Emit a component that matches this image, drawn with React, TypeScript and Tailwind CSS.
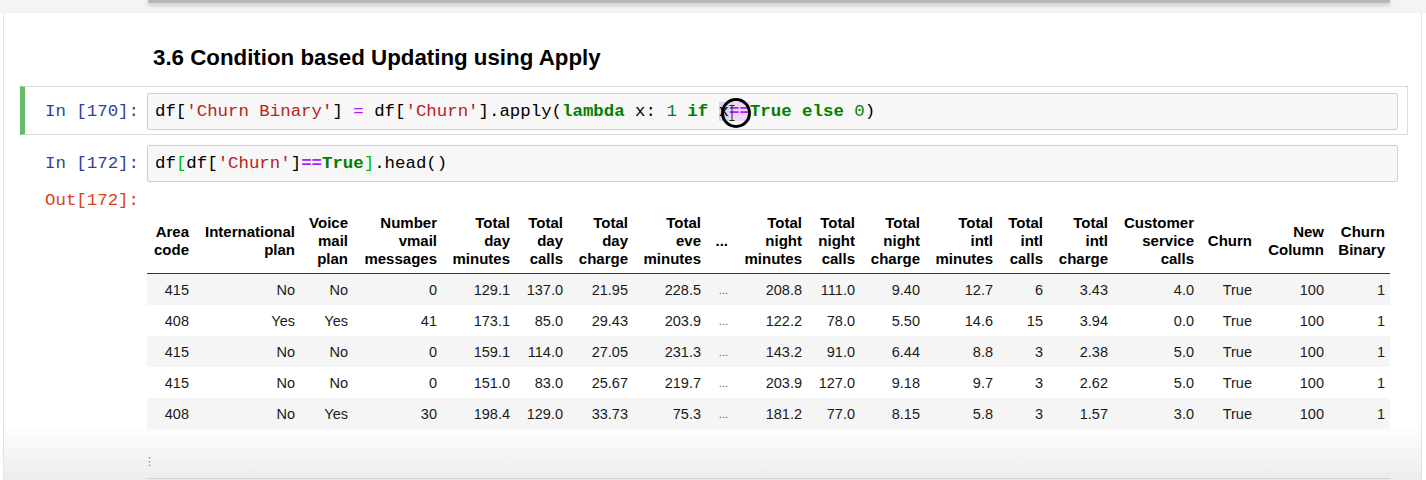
import React from "react";

const colWidths = [47, 106, 53, 89, 73, 53, 65, 73, 27, 74, 53, 65, 73, 50, 65, 86, 58, 72, 61];

const headers = [
  ["Area", "code"],
  ["International", "plan"],
  ["Voice", "mail", "plan"],
  ["Number", "vmail", "messages"],
  ["Total", "day", "minutes"],
  ["Total", "day", "calls"],
  ["Total", "day", "charge"],
  ["Total", "eve", "minutes"],
  ["..."],
  ["Total", "night", "minutes"],
  ["Total", "night", "calls"],
  ["Total", "night", "charge"],
  ["Total", "intl", "minutes"],
  ["Total", "intl", "calls"],
  ["Total", "intl", "charge"],
  ["Customer", "service", "calls"],
  ["Churn"],
  ["New", "Column"],
  ["Churn", "Binary"],
];

const rows = [
  ["415", "No", "No", "0", "129.1", "137.0", "21.95", "228.5", "...", "208.8", "111.0", "9.40", "12.7", "6", "3.43", "4.0", "True", "100", "1"],
  ["408", "Yes", "Yes", "41", "173.1", "85.0", "29.43", "203.9", "...", "122.2", "78.0", "5.50", "14.6", "15", "3.94", "0.0", "True", "100", "1"],
  ["415", "No", "No", "0", "159.1", "114.0", "27.05", "231.3", "...", "143.2", "91.0", "6.44", "8.8", "3", "2.38", "5.0", "True", "100", "1"],
  ["415", "No", "No", "0", "151.0", "83.0", "25.67", "219.7", "...", "203.9", "127.0", "9.18", "9.7", "3", "2.62", "5.0", "True", "100", "1"],
  ["408", "No", "Yes", "30", "198.4", "129.0", "33.73", "75.3", "...", "181.2", "77.0", "8.15", "5.8", "3", "1.57", "3.0", "True", "100", "1"],
];

const mono = "font-['Liberation_Mono',monospace] text-[17.4px] leading-[22px]";
const kw = "text-[#008000] font-bold";
const str = "text-[#ba2121]";
const op = "text-[#aa22ff]";
const num = "text-[#008800]";

function Prompt({ label, out }: { label: string; out?: boolean }) {
  return (
    <div
      className={`w-[122px] shrink-0 pr-[8px] text-right ${out ? "" : "h-[37px] flex items-center justify-end"} ${mono} ${
        out ? "text-[#d84315]" : "text-[#303f9f]"
      }`}
    >
      {label}
    </div>
  );
}

function DataFrame() {
  return (
    <table className="table-fixed border-collapse w-[1243px] font-['Liberation_Sans',Arial,sans-serif] text-black">
      <colgroup>
        {colWidths.map((w, i) => (
          <col key={i} style={{ width: w }} />
        ))}
      </colgroup>
      <thead>
        <tr className="border-b border-[#333]">
          {headers.map((h, i) => (
            <th key={i} className="px-[5px] pt-[4px] pb-[5px] text-right align-middle font-bold text-[15px] leading-[18px] whitespace-nowrap">
              {h.map((line, j) => (
                <div key={j}>{line}</div>
              ))}
            </th>
          ))}
        </tr>
      </thead>
      <tbody>
        {rows.map((r, i) => (
          <tr key={i} className={`h-[31px] ${i % 2 === 0 ? "bg-[#f5f5f5]" : "bg-white"}`}>
            {r.map((v, j) => (
              <td
                key={j}
                className={`px-[5px] pt-[1px] text-right align-middle leading-[18px] whitespace-nowrap ${
                  v === "..." ? "text-[11px] text-[#555]" : "text-[14.5px] text-[#1a1a1a]"
                }`}
              >
                {v}
              </td>
            ))}
          </tr>
        ))}
      </tbody>
    </table>
  );
}

export default function App() {
  return (
    <div className="w-[1426px] h-[480px] overflow-hidden bg-white flex flex-col">
      {/* tail of the previous output */}
      <div className="h-[13px] shrink-0 bg-[#f4f4f4]">
        <div className="ml-[148px] w-[1242px] h-[3px] bg-[#b8b8b8] shadow-[0_2px_4px_rgba(0,0,0,0.25)]" />
      </div>

      <div className="flex-1 ml-[3px] mr-[4px] border-x border-[#e2e2e2] bg-linear-to-b from-white from-[88%] to-[#ececec] flex flex-col">
        <h2 className="pt-[33px] pl-[149px] font-['Liberation_Sans',Arial,sans-serif] font-bold text-[22.3px] leading-[24px] text-black">
          3.6 Condition based Updating using Apply
        </h2>

        {/* selected cell */}
        <div className="mt-[16px] ml-[16px] w-[1388px] flex border border-[#cfe3cf] border-l-[5px] border-l-[#66bb6a] pt-[6px] pb-[4px]">
          <Prompt label="In [170]:" />
          <div className="w-[1251px] h-[37px] border border-[#cfcfcf] bg-[#f7f7f7] rounded-[2px] pl-[7px] flex items-center">
            <span className={`${mono} text-black whitespace-pre`}>
              df[<span className={str}>'Churn Binary'</span>] <span className={op}>=</span> df[<span className={str}>'Churn'</span>].apply(<span className={kw}>lambda</span> x: <span className={num}>1</span> <span className={kw}>if</span>{" "}
              <span className="relative">
                <span className="bg-[#d6d2f2]">x</span>
                <span className={`${op} font-bold bg-[#ecd9f5]`}>==</span>
                <span className="absolute left-[2px] top-[-4px] w-[30px] h-[30px] rounded-full border-[3px] border-black" />
                <svg className="absolute left-[10px] top-[3px]" width="6" height="16" viewBox="0 0 6 16">
                  <path d="M0.5 0.5 H5.5 M3 0.5 V15.5 M0.5 15.5 H5.5" stroke="#222" strokeWidth="1" fill="none" />
                </svg>
              </span>
              <span className={kw}>True</span> <span className={kw}>else</span> <span className={num}>0</span>)
            </span>
          </div>
        </div>

        {/* second cell */}
        <div className="mt-[3px] ml-[16px] w-[1388px] flex border border-transparent border-l-[5px] pt-[6px] pb-[4px]">
          <Prompt label="In [172]:" />
          <div className="w-[1251px] h-[37px] border border-[#cfcfcf] bg-[#f7f7f7] rounded-[2px] pl-[7px] flex items-center">
            <span className={`${mono} text-black whitespace-pre`}>
              df<span className="text-[#00bb00]">[</span>df[<span className={str}>'Churn'</span>]<span className={`${op} font-bold`}>==</span>
              <span className={kw}>True</span>
              <span className="text-[#00bb00]">]</span>.head()
            </span>
          </div>
        </div>

        {/* output */}
        <div className="ml-[21px] flex pt-[3px]">
          <Prompt label="Out[172]:" out />
          <div className="pt-[20px]">
            <DataFrame />
          </div>
        </div>

        <div className="mt-[25px] ml-[140px] h-[16px] text-[11px] leading-[16px] text-[#777] font-['DejaVu_Sans',sans-serif]">⋮</div>
        <div className="mt-[8px] ml-[143px] w-[1243px] h-px bg-[#d0d0d0]" />
      </div>
    </div>
  );
}
